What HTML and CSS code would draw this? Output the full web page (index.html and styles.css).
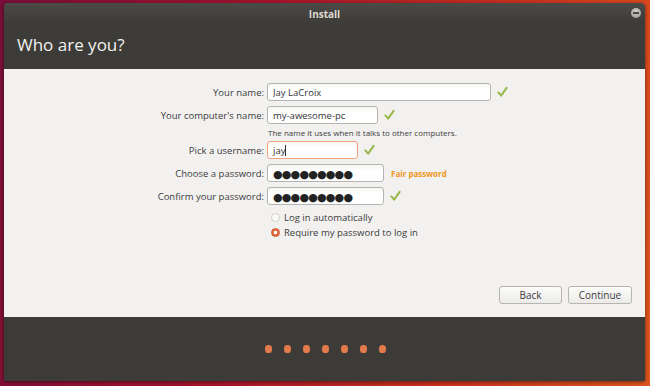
FILE: index.html
```html
<!DOCTYPE html>
<html lang="en">
<head>
    <meta charset="UTF-8">
    <title>Install</title>
    <link rel="stylesheet" href="styles.css">
</head>
<body>
    <div class="window">
        <div class="top">
            <div class="titlebar">
                <span class="title">Install</span>
                <span class="min-btn"></span>
            </div>
            <h1>Who are you?</h1>
        </div>

        <div class="content">
            <form class="form">
                <div class="row">
                    <label>Your name:</label>
                    <input class="field w-name" type="text" value="Jay LaCroix">
                    <svg class="tick" viewBox="0 0 12 12"><path d="M1.5 6.5 L4.5 10 L10.5 1.5"/></svg>
                </div>
                <div class="row">
                    <label>Your computer's name:</label>
                    <input class="field w-pc" type="text" value="my-awesome-pc">
                    <svg class="tick" viewBox="0 0 12 12"><path d="M1.5 6.5 L4.5 10 L10.5 1.5"/></svg>
                </div>
                <div class="hint">The name it uses when it talks to other computers.</div>
                <div class="row">
                    <label>Pick a username:</label>
                    <div class="field w-user focus">jay<span class="caret"></span></div>
                    <svg class="tick" viewBox="0 0 12 12"><path d="M1.5 6.5 L4.5 10 L10.5 1.5"/></svg>
                </div>
                <div class="row">
                    <label>Choose a password:</label>
                    <div class="field w-pass dots">●●●●●●●●●</div>
                    <span class="strength">Fair password</span>
                </div>
                <div class="row row-last">
                    <label>Confirm your password:</label>
                    <div class="field w-pass dots">●●●●●●●●●</div>
                    <svg class="tick" viewBox="0 0 12 12"><path d="M1.5 6.5 L4.5 10 L10.5 1.5"/></svg>
                </div>
                <div class="radio-row">
                    <span class="radio"></span>
                    <span>Log in automatically</span>
                </div>
                <div class="radio-row">
                    <span class="radio checked"></span>
                    <span>Require my password to log in</span>
                </div>
            </form>

            <div class="buttons">
                <button type="button" class="btn btn-back">Back</button>
                <button type="button" class="btn btn-continue">Continue</button>
            </div>
        </div>

        <div class="footer">
            <div class="progress">
                <span class="dot"></span>
                <span class="dot"></span>
                <span class="dot"></span>
                <span class="dot"></span>
                <span class="dot"></span>
                <span class="dot"></span>
                <span class="dot"></span>
            </div>
        </div>
    </div>
</body>
</html>
```

FILE: styles.css
```css
body {
    margin: 0;
    width: 650px;
    height: 386px;
    overflow: hidden;
    font-family: "Open Sans", "DejaVu Sans", sans-serif;
    background: linear-gradient(100deg, #7a0f3a 0%, #a3122e 35%, #c8301f 70%, #e0561e 100%);
    padding: 3px 5px 5px 4px;
    box-sizing: border-box;
}
.window {
    height: 378px;
    display: flex;
    flex-direction: column;
    box-shadow: 0 1px 4px rgba(0, 0, 0, 0.5);
}
.top {
    height: 66px;
    background: linear-gradient(#4b4a46, #3d3c38 30%, #3c3b37);
    border-radius: 4px 4px 0 0;
}
.titlebar {
    height: 21px;
    position: relative;
    display: flex;
    align-items: center;
    justify-content: center;
}
.title {
    color: #dfdbd2;
    font-size: 10px;
    font-weight: bold;
}
.min-btn {
    position: absolute;
    right: 4px;
    top: 5px;
    width: 10px;
    height: 10px;
    border-radius: 50%;
    background: radial-gradient(circle at 50% 35%, #cfcdc7, #97958f);
}
.min-btn::after {
    content: "";
    position: absolute;
    left: 2px;
    right: 2px;
    top: 4px;
    height: 2px;
    background: #4a4945;
}
h1 {
    margin: 0;
    padding: 6px 0 0 13px;
    color: #f2f1f0;
    font-weight: normal;
    font-size: 17px;
    line-height: 30px;
}
.content {
    height: 248px;
    background: #f2f1f0;
    display: flex;
    flex-direction: column;
    justify-content: space-between;
    padding: 14px 13px 13px 0;
    box-sizing: border-box;
}
.form {
    font-size: 9.5px;
    color: #3c3c3c;
}
.row {
    display: flex;
    align-items: center;
    height: 18px;
    margin-bottom: 5px;
}
.row-last {
    margin-bottom: 5px;
}
.row label {
    width: 260px;
    text-align: right;
    padding-right: 3px;
    flex: none;
}
.field {
    height: 18px;
    box-sizing: border-box;
    border: 1px solid #b6b4ae;
    border-radius: 3px;
    background: linear-gradient(#f6f6f5, #ffffff 40%);
    padding: 0 5px;
    font: inherit;
    color: #333;
    display: flex;
    align-items: center;
}
.w-name { width: 224px; }
.w-pc { width: 111px; }
.w-user { width: 91px; }
.w-pass { width: 117px; }
.focus {
    border-color: #f0a37f;
}
.caret {
    display: inline-block;
    width: 1px;
    height: 11px;
    background: #333;
}
.dots {
    font-size: 11px;
    letter-spacing: -0.8px;
    color: #222;
}
.tick {
    width: 11px;
    height: 12px;
    margin-left: 6px;
    fill: none;
    stroke: #96b94a;
    stroke-width: 2.2;
    stroke-linecap: round;
    stroke-linejoin: round;
}
.hint {
    margin: -2px 0 3px 264px;
    font-size: 8px;
    line-height: 11px;
}
.strength {
    margin-left: 7px;
    color: #ef9518;
    font-weight: bold;
    font-size: 8px;
}
.radio-row {
    display: flex;
    align-items: center;
    height: 15px;
    padding-left: 267px;
    font-size: 9.5px;
}
.radio {
    width: 9px;
    height: 9px;
    box-sizing: border-box;
    border-radius: 50%;
    border: 1px solid #d0cec9;
    background: #fafafa;
    margin-right: 4px;
}
.radio.checked {
    border-color: #c6562f;
    background: radial-gradient(circle, #ffffff 0 1.5px, #e46e41 2px);
}
.buttons {
    display: flex;
    justify-content: flex-end;
    gap: 6px;
}
.btn {
    height: 18px;
    border: 1px solid #b7b5b0;
    border-radius: 3px;
    background: linear-gradient(#fbfbfa, #ecebe9);
    font-family: inherit;
    font-size: 10px;
    color: #3c3c3c;
    padding: 0;
}
.btn-back { width: 63px; }
.btn-continue { width: 64px; }
.footer {
    flex: 1;
    background: #3c3b37;
    display: flex;
    justify-content: center;
    padding-top: 28px;
    box-sizing: border-box;
}
.progress {
    display: flex;
    gap: 12px;
    height: 8px;
    margin-left: 2px;
}
.dot {
    width: 7px;
    height: 8px;
    border-radius: 45%;
    background: #e37a4c;
}
```
